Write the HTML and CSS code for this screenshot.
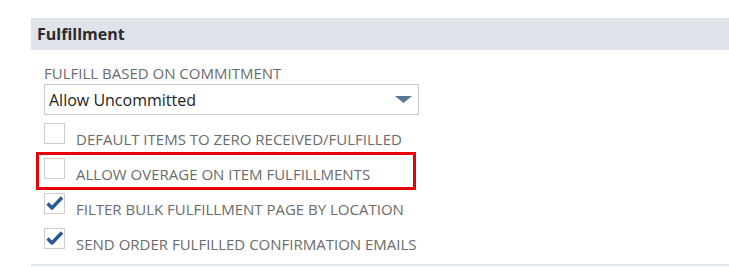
FILE: index.html
```html
<!DOCTYPE html>
<html>
<head>
<meta charset="utf-8">
<link rel="stylesheet" href="styles.css">
</head>
<body>
<div class="page">
  <section class="section">
    <div class="section-header">Fulfillment</div>
    <div class="section-body">
      <div class="field">
        <div class="field-label">FULFILL BASED ON COMMITMENT</div>
        <div class="select">
          <span class="select-value">Allow Uncommitted</span>
          <svg class="select-arrow" width="17" height="7" viewBox="0 0 17 7"><path d="M0 0H17L8.5 7Z" fill="#5a7896"/></svg>
        </div>
      </div>
      <div class="checks">
        <div class="check-row">
          <span class="box"></span>
          <span class="check-label">DEFAULT ITEMS TO ZERO RECEIVED/FULFILLED</span>
        </div>
        <div class="check-row highlight">
          <span class="box"></span>
          <span class="check-label">ALLOW OVERAGE ON ITEM FULFILLMENTS</span>
        </div>
        <div class="check-row">
          <span class="box"><svg width="20" height="20" viewBox="0 0 20 20"><path d="M3.5 10.5L8 15L18 4.5" fill="none" stroke="#2b5697" stroke-width="3.4" stroke-linejoin="round"/></svg></span>
          <span class="check-label">FILTER BULK FULFILLMENT PAGE BY LOCATION</span>
        </div>
        <div class="check-row">
          <span class="box"><svg width="20" height="20" viewBox="0 0 20 20"><path d="M3.5 10.5L8 15L18 4.5" fill="none" stroke="#2b5697" stroke-width="3.4" stroke-linejoin="round"/></svg></span>
          <span class="check-label">SEND ORDER FULFILLED CONFIRMATION EMAILS</span>
        </div>
      </div>
    </div>
  </section>
</div>
</body>
</html>
```

FILE: styles.css
```css
html, body {
  margin: 0;
  padding: 0;
  background: #ffffff;
}
body {
  font-family: "Open Sans", "Liberation Sans", sans-serif;
}
.page {
  padding: 18px 0 0 31px;
}
.section {
  border-bottom: 2px solid #e3e6eb;
}
.section-header {
  height: 32px;
  line-height: 32px;
  background: #dfe3e9;
  padding-left: 6px;
  font-size: 16px;
  font-weight: 700;
  color: #2b2b2b;
}
.section-body {
  padding: 0 0 0 13px;
  height: 214px;
}
.field-label {
  padding-top: 13px;
  font-size: 15px;
  line-height: 20px;
  color: #6b6b6b;
}
.select {
  box-sizing: border-box;
  width: 375px;
  height: 31px;
  margin-top: 1px;
  border: 1px solid #cacaca;
  display: flex;
  align-items: center;
  justify-content: space-between;
  padding: 0 6px 0 4px;
}
.select-value {
  font-size: 16px;
  color: #1e1e1e;
}
.select-arrow {
  display: block;
}
.checks {
  padding-top: 5px;
}
.check-row {
  position: relative;
  display: flex;
  align-items: flex-start;
  height: 35px;
}
.box {
  box-sizing: border-box;
  width: 21px;
  height: 21px;
  margin-top: 3px;
  border: 1px solid #cdcdcd;
  background: #fff;
  flex: none;
}
.box svg {
  display: block;
  margin: -1px 0 0 -1px;
}
.check-label {
  margin-left: 11px;
  padding-top: 9px;
  font-size: 15px;
  line-height: 20px;
  color: #6b6b6b;
}
.highlight::after {
  content: "";
  position: absolute;
  left: -8px;
  top: -3px;
  width: 380px;
  height: 38px;
  box-sizing: border-box;
  border: 3px solid #e8000b;
}
```
